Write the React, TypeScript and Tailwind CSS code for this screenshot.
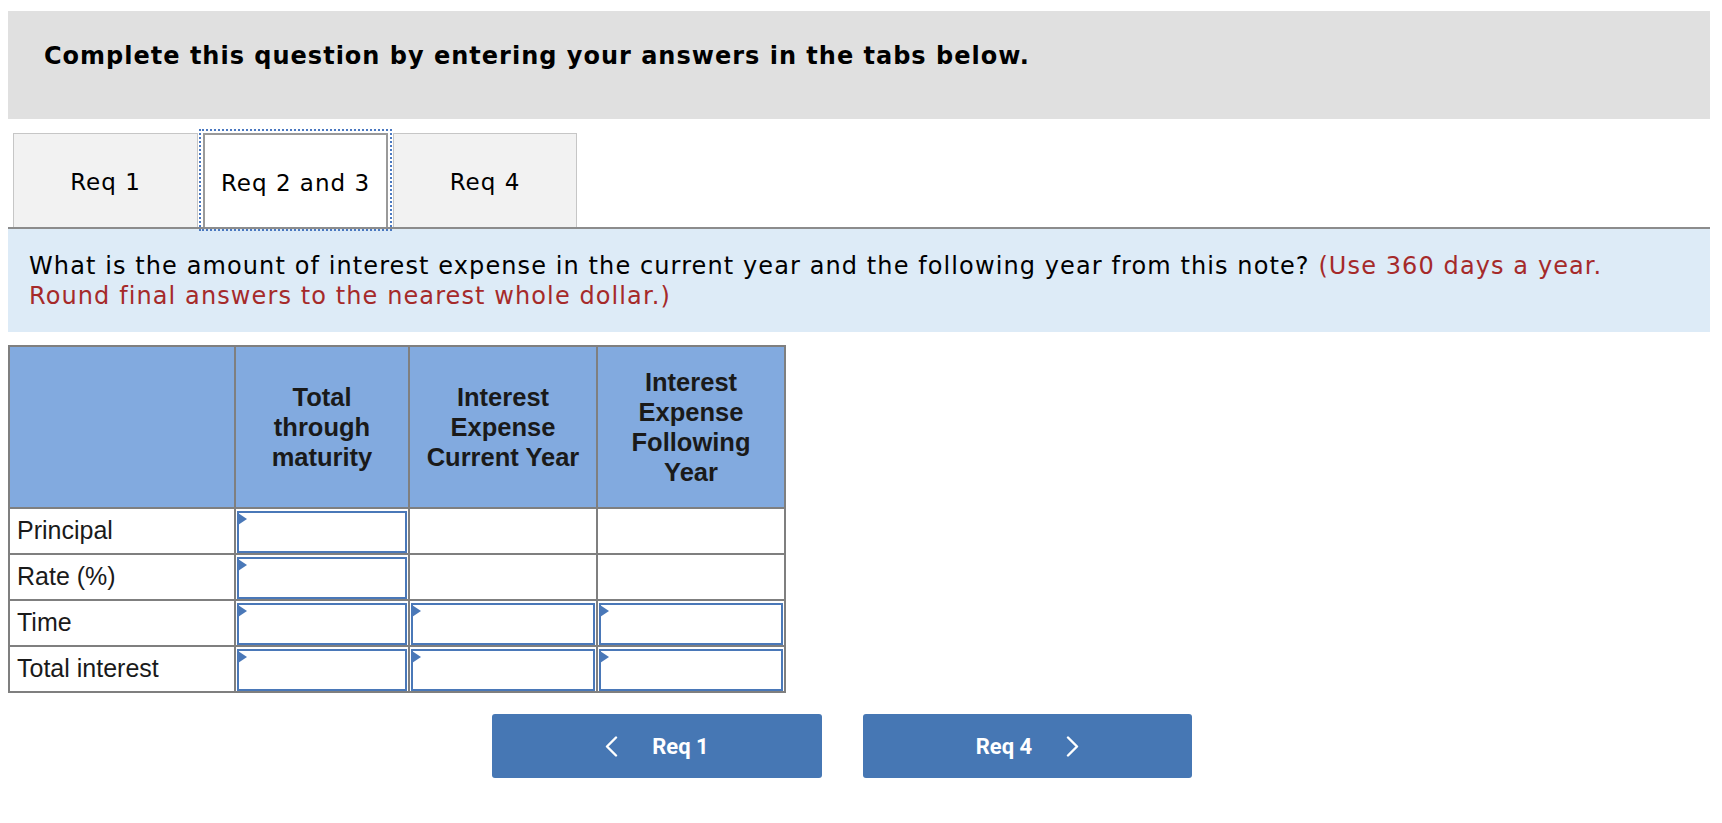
import React from "react"

const verdana = "font-['Verdana','DejaVu_Sans',sans-serif]"
const arial = "font-['Arial','Liberation_Sans',sans-serif]"

function InputBox() {
  return (
    <div className="relative h-full w-full border-2 border-[#4a78b8] bg-white">
      <span className="absolute -left-px top-0 h-0 w-0 border-y-[6px] border-l-[9px] border-y-transparent border-l-[#4a78b8]" />
    </div>
  )
}

function Chevron({ dir }: { dir: "left" | "right" }) {
  return (
    <svg width="13" height="21" viewBox="0 0 13 21" fill="none">
      <polyline
        points={dir === "left" ? "11,1.5 2,10.5 11,19.5" : "2,1.5 11,10.5 2,19.5"}
        stroke="white"
        strokeWidth="2.4"
        strokeLinecap="round"
        strokeLinejoin="round"
      />
    </svg>
  )
}

const rows: { label: string; inputs: boolean[] }[] = [
  { label: "Principal", inputs: [true, false, false] },
  { label: "Rate (%)", inputs: [true, false, false] },
  { label: "Time", inputs: [true, true, true] },
  { label: "Total interest", inputs: [true, true, true] },
]

export default function App() {
  return (
    <div className="min-h-screen bg-white pl-[8px] pr-[12px] pt-[11px] text-black">
      {/* instructions */}
      <div className={`h-[108px] bg-[#e0e0e0] pl-[36px] pt-[30px] text-[24px] font-bold leading-[30px] tracking-[1px] ${verdana}`}>
        Complete this question by entering your answers in the tabs below.
      </div>

      {/* tabs */}
      <div className={`mt-[14px] flex border-b-2 border-[#8c8c8c] pl-[5px] text-[23px] tracking-[1px] ${verdana}`}>
        <div className="flex h-[94px] w-[185px] items-center justify-center border border-b-0 border-[#c6c6c6] bg-[#f2f2f2] pt-[4px]">
          Req 1
        </div>
        <div className="ml-[5px] flex h-[94px] w-[185px] items-center justify-center border-2 border-b-0 border-[#9a9a9a] bg-white pt-[4px] outline-2 outline-offset-[2px] outline-dotted outline-[#4a78c0]">
          Req 2 and 3
        </div>
        <div className="ml-[5px] flex h-[94px] w-[184px] items-center justify-center border border-b-0 border-[#c6c6c6] bg-[#f2f2f2] pt-[4px]">
          Req 4
        </div>
      </div>

      {/* question */}
      <div className={`bg-[#ddebf7] pb-[21px] pl-[21px] pr-[70px] pt-[22px] text-[24px] leading-[30px] tracking-[1.1px] ${verdana}`}>
        What is the amount of interest expense in the current year and the following year from this note?{" "}
        <span className="text-[#a52a2a]">(Use 360 days a year. Round final answers to the nearest whole dollar.)</span>
      </div>

      {/* table */}
      <div className={`mt-[13px] inline-grid grid-cols-[224px_172px_186px_186px] gap-[2px] bg-[#7f7f7f] p-[2px] ${arial}`}>
        <div className="h-[160px] bg-[#82aadf]" />
        {["Total through maturity", "Interest Expense Current Year", "Interest Expense Following Year"].map((h) => (
          <div
            key={h}
            className="flex h-[160px] items-center justify-center bg-[#82aadf] px-2 text-center text-[25.5px] font-bold leading-[30px] text-[#1a1a1a]"
          >
            {h}
          </div>
        ))}
        {rows.map((r) => (
          <React.Fragment key={r.label}>
            <div className="flex h-[44px] items-center bg-white pl-[7px] text-[25px] text-[#1a1a1a]">{r.label}</div>
            {r.inputs.map((on, i) => (
              <div key={i} className="h-[44px] bg-white px-px pt-[2px]">
                {on ? <InputBox /> : null}
              </div>
            ))}
          </React.Fragment>
        ))}
      </div>

      {/* navigation */}
      <div className="ml-[484px] mt-[21px] flex gap-[41px] font-['Roboto',sans-serif] text-[22px] font-bold text-white">
        <button className="flex h-[64px] w-[330px] items-center justify-center gap-[34px] rounded-[3px] bg-[#4677b4]">
          <Chevron dir="left" />
          <span>Req 1</span>
        </button>
        <button className="flex h-[64px] w-[329px] items-center justify-center gap-[34px] rounded-[3px] bg-[#4677b4]">
          <span>Req 4</span>
          <Chevron dir="right" />
        </button>
      </div>
    </div>
  )
}
